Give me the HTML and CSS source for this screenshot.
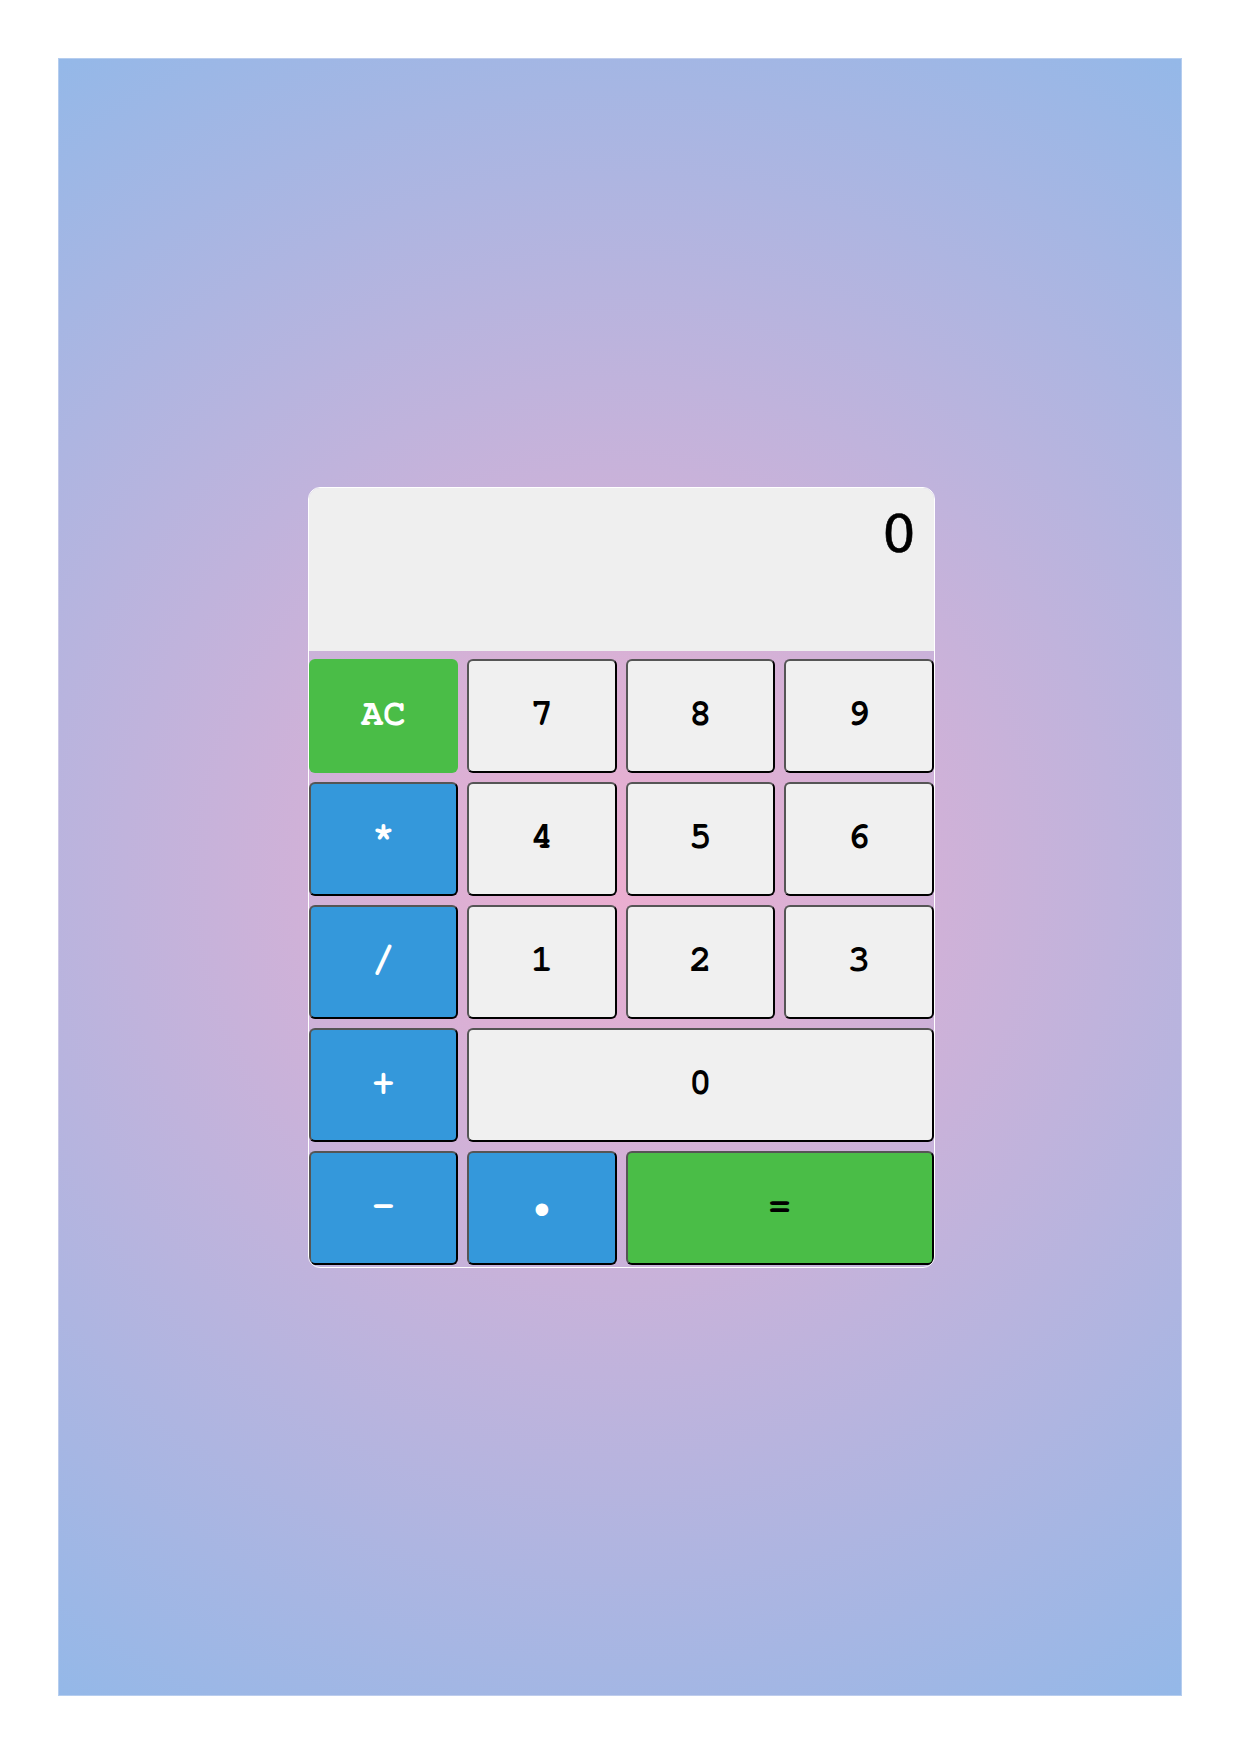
FILE: index.html
```html
<!DOCTYPE html>
<html lang="en">
<head>
<meta charset="utf-8">
<title>Calculator</title>
<link rel="stylesheet" href="styles.css">
</head>
<body>
<div class="page">
  <div class="calc">
    <div class="display">0</div>
    <div class="keys">
      <button class="key key-ac">AC</button>
      <button class="key">7</button>
      <button class="key">8</button>
      <button class="key">9</button>
      <button class="key key-op">*</button>
      <button class="key">4</button>
      <button class="key">5</button>
      <button class="key">6</button>
      <button class="key key-op">/</button>
      <button class="key">1</button>
      <button class="key">2</button>
      <button class="key">3</button>
      <button class="key key-op">+</button>
      <button class="key key-zero">0</button>
      <button class="key key-op">-</button>
      <button class="key key-op key-dot">&bull;</button>
      <button class="key key-eq">=</button>
    </div>
  </div>
</div>
</body>
</html>
```

FILE: styles.css
```css
html, body {
  margin: 0;
  padding: 0;
  background: #fff;
}

.page {
  margin: 58px;
  height: 1638px;
  box-sizing: border-box;
  border: 1px solid rgba(255, 255, 255, 0.3);
  background: radial-gradient(circle, #ecaed0 0%, #94b8e8 100%);
  display: flex;
  align-items: center;
  justify-content: center;
}

.calc {
  width: 627px;
  margin-left: 2px;
  box-sizing: border-box;
  border: 1px solid #fff;
  border-radius: 12px;
  overflow: hidden;
}

.display {
  height: 163px;
  box-sizing: border-box;
  padding: 16px 18px;
  background: #efefef;
  text-align: right;
  font-family: "DejaVu Sans", sans-serif;
  font-size: 52px;
  color: #000;
  -webkit-text-stroke: 0.6px #000;
}

.keys {
  display: grid;
  grid-template-columns: repeat(4, 1fr);
  grid-auto-rows: 114px;
  gap: 9px;
  padding: 8px 0 2px;
}

.key {
  margin: 0;
  padding: 0 0 4px;
  font-family: "Nimbus Mono PS", "Nimbus Mono L", "FreeMono", "Courier 10 Pitch", "Courier", "Liberation Mono", monospace;
  font-weight: bold;
  font-size: 37px;
  color: #000;
  background: #f0f0f0;
  border: 2px solid;
  border-color: #555 #000 #000 #555;
  border-radius: 6px;
}

.key-ac {
  background: #4abd47;
  color: #fff;
  border: none;
}

.key-op {
  background: #3498db;
  color: #fff;
}

.key-dot {
  font-size: 42px;
}

.key-zero {
  grid-column: span 3;
}

.key-eq {
  grid-column: span 2;
  background: #4abd47;
}
```
